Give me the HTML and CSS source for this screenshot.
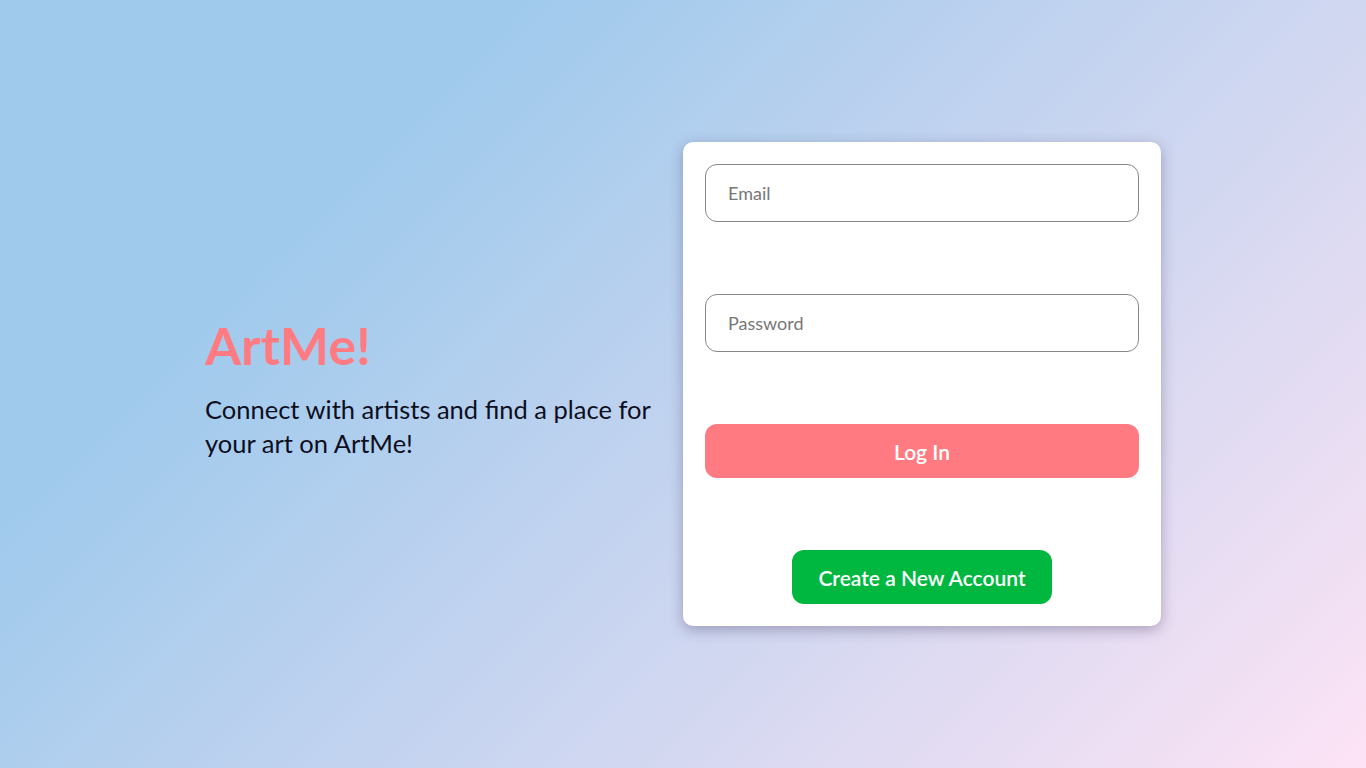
FILE: index.html
```html
<!DOCTYPE html>
<html lang="en">
<head>
<meta charset="utf-8">
<title>ArtMe! - Log In</title>
<link rel="stylesheet" href="styles.css">
</head>
<body>
<main class="page">
  <section class="intro">
    <h1 class="brand">ArtMe!</h1>
    <p class="tagline">Connect with artists and find a place for your art on ArtMe!</p>
  </section>
  <section class="card">
    <form class="login-form">
      <input class="field" type="text" placeholder="Email">
      <input class="field" type="password" placeholder="Password">
      <button class="btn btn-login" type="button">Log In</button>
      <div class="create-row">
        <button class="btn btn-create" type="button">Create a New Account</button>
      </div>
    </form>
  </section>
</main>
</body>
</html>
```

FILE: styles.css
```css
* { box-sizing: border-box; }
html, body { height: 100%; }
body {
  margin: 0;
  font-family: Lato, "Noto Sans", "DejaVu Sans", sans-serif;
  background: linear-gradient(135deg, #a0caec 25%, #fde3f5 100%);
  min-height: 100vh;
}
.page {
  min-height: 100vh;
  display: flex;
  justify-content: center;
  align-items: center;
}
.intro {
  width: 478px;
  padding-right: 20px;
  padding-top: 9px;
}
.brand {
  margin: 0;
  font-size: 52px;
  font-weight: 700;
  color: #ff7b81;
  line-height: 1.1;
}
.tagline {
  margin: 17px 0 0;
  font-size: 25.5px;
  line-height: 34px;
  color: #0d0f1f;
}
.card {
  width: 478px;
  background: #fff;
  border-radius: 10px;
  box-shadow: 0 4px 14px rgba(60, 50, 90, 0.35);
  padding: 22px;
}
.login-form {
  display: flex;
  flex-direction: column;
}
.field {
  height: 58px;
  border: 1px solid #888;
  border-radius: 12px;
  padding: 0 22px;
  font-family: inherit;
  font-size: 18px;
  color: #333;
  margin-bottom: 72px;
  outline: none;
}
.field::placeholder { color: #777; }
.btn {
  border: none;
  height: 54px;
  border-radius: 12px;
  color: #fff;
  font-family: inherit;
  font-size: 21px;
  font-weight: 600;
  cursor: pointer;
}
.btn-login {
  background: #ff7b81;
  width: 100%;
}
.create-row {
  display: flex;
  justify-content: center;
  margin-top: 72px;
}
.btn-create {
  background: #00b83f;
  width: 260px;
}
```
